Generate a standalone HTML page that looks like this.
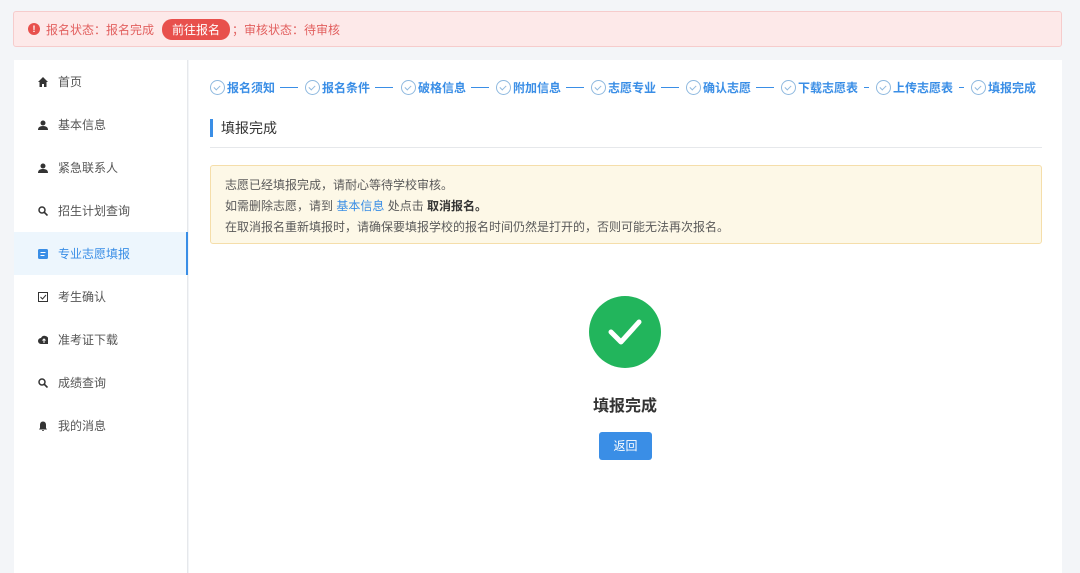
<!DOCTYPE html>
<html><head><meta charset="utf-8"><style>
*{margin:0;padding:0;box-sizing:border-box}
body{width:1080px;height:573px;background:#f3f5f8;font-family:"Liberation Sans","Noto Sans CJK SC",sans-serif;position:relative;overflow:hidden;color:#555}
.alert{position:absolute;left:13px;top:11px;width:1049px;height:36px;background:#fde9e9;border:1px solid #f6cccc;border-radius:3px;font-size:12px;color:#e2605f;display:flex;align-items:center;padding-left:14px}
.alert .dot{width:12px;height:12px;border-radius:50%;background:#e8504c;color:#fff;font-size:9px;text-align:center;line-height:12px;font-weight:bold;margin-right:6px}
.alert .btn{background:#e8504c;color:#fff;border-radius:10px;padding:2px 10px;margin:0 2px 0 8px;font-size:12px}
.side{position:absolute;left:14px;top:60px;width:174px;height:513px;background:#fff;border-right:1px solid #e6e8eb}
.item{height:43px;display:flex;align-items:center;padding-left:24px;font-size:12px;color:#555;position:relative}
.item .ic{width:10px;height:10px;margin-right:10px;display:inline-flex;align-items:center;justify-content:center}
.item.act{background:#edf6fd;color:#3a8ee6}
.item.act:after{content:"";position:absolute;right:-1px;top:0;bottom:0;width:2px;background:#3a8ee6}
.main{position:absolute;left:189px;top:60px;width:873px;height:513px;background:#fff}
.step{position:absolute;top:79px;font-size:12px;font-weight:bold;color:#3a8ee6;display:flex;align-items:center;white-space:nowrap}
.step .c{width:15px;height:15px;border:1px solid #8fb9df;border-radius:50%;margin-right:2px;position:relative}
.step .c:after{content:"";position:absolute;left:4px;top:3px;width:3px;height:5px;border:solid #8fb9df;border-width:0 1px 1px 0;transform:rotate(45deg)}
.ln{position:absolute;top:87px;height:1px;background:#3a8ee6}
</style></head><body>
<div class="alert"><span class="dot">!</span>报名状态：报名完成<span class="btn">前往报名</span>；审核状态：待审核</div>
<div class="side">
<div class="item"><span class="ic"><svg width="10" height="10"><path d="M5 0L0 5h1.5v5h2.5V7h2v3h2.5V5H10z" fill="#333"/></svg></span>首页</div>
<div class="item"><span class="ic"><svg width="10" height="10"><circle cx="5" cy="3" r="2.5" fill="#333"/><path d="M0 10c0-3 2-4 5-4s5 1 5 4z" fill="#333"/></svg></span>基本信息</div>
<div class="item"><span class="ic"><svg width="10" height="10"><circle cx="5" cy="3" r="2.5" fill="#333"/><path d="M0 10c0-3 2-4 5-4s5 1 5 4z" fill="#333"/></svg></span>紧急联系人</div>
<div class="item"><span class="ic"><svg width="10" height="10"><circle cx="4" cy="4" r="3" stroke="#333" stroke-width="1.5" fill="none"/><path d="M6 6l3.5 3.5" stroke="#333" stroke-width="1.6"/></svg></span>招生计划查询</div>
<div class="item act"><span class="ic"><svg width="10" height="10"><rect width="10" height="10" rx="1.5" fill="#3a8ee6"/><path d="M2.5 3.5h5M2.5 6.5h4" stroke="#fff" stroke-width="1"/></svg></span>专业志愿填报</div>
<div class="item"><span class="ic"><svg width="10" height="10"><rect x=".5" y=".5" width="9" height="9" stroke="#333" fill="none"/><path d="M2.5 5l2 2 3.5-4" stroke="#333" fill="none"/></svg></span>考生确认</div>
<div class="item"><span class="ic"><svg width="12" height="10"><path d="M3 9a3 3 0 010-6 4 4 0 017.5 1A2.5 2.5 0 0110 9z" fill="#333"/><path d="M6 4v4M4.5 5.5L6 4l1.5 1.5" stroke="#fff" fill="none"/></svg></span>准考证下载</div>
<div class="item"><span class="ic"><svg width="10" height="10"><circle cx="4" cy="4" r="3" stroke="#333" stroke-width="1.5" fill="none"/><path d="M6 6l3.5 3.5" stroke="#333" stroke-width="1.6"/></svg></span>成绩查询</div>
<div class="item"><span class="ic"><svg width="10" height="10"><path d="M5 0.5C3 .5 2 2 2 4v3L1 8.5h8L8 7V4C8 2 7 .5 5 .5zM4 9h2a1 1 0 01-2 0z" fill="#333"/></svg></span>我的消息</div>
</div>
<div class="main"></div>
<div class="step" style="left:210px"><span class="c"></span>报名须知</div><div class="ln" style="left:280px;width:18px"></div>
<div class="step" style="left:305px"><span class="c"></span>报名条件</div><div class="ln" style="left:375px;width:18px"></div>
<div class="step" style="left:401px"><span class="c"></span>破格信息</div><div class="ln" style="left:471px;width:18px"></div>
<div class="step" style="left:496px"><span class="c"></span>附加信息</div><div class="ln" style="left:566px;width:18px"></div>
<div class="step" style="left:591px"><span class="c"></span>志愿专业</div><div class="ln" style="left:661px;width:18px"></div>
<div class="step" style="left:686px"><span class="c"></span>确认志愿</div><div class="ln" style="left:756px;width:18px"></div>
<div class="step" style="left:781px"><span class="c"></span>下载志愿表</div><div class="ln" style="left:864px;width:5px"></div>
<div class="step" style="left:876px"><span class="c"></span>上传志愿表</div><div class="ln" style="left:959px;width:5px"></div>
<div class="step" style="left:971px"><span class="c"></span>填报完成</div>
<div style="position:absolute;left:210px;top:119px;width:3px;height:18px;background:#3a8ee6"></div>
<div style="position:absolute;left:221px;top:119px;font-size:14px;color:#333;line-height:18px">填报完成</div>
<div style="position:absolute;left:210px;top:147px;width:832px;height:1px;background:#e6e8eb"></div>
<div style="position:absolute;left:210px;top:165px;width:832px;height:79px;background:#fdf8e7;border:1px solid #f5deaa;border-radius:3px;padding:9px 14px;font-size:12px;line-height:21px;color:#5a5a5a">
志愿已经填报完成，请耐心等待学校审核。<br>如需删除志愿，请到 <span style="color:#3a8ee6">基本信息</span> 处点击 <b style="color:#333">取消报名。</b><br>在取消报名重新填报时，请确保要填报学校的报名时间仍然是打开的，否则可能无法再次报名。</div>
<div style="position:absolute;left:589px;top:296px;width:72px;height:72px;border-radius:50%;background:#22b55c"></div>
<svg style="position:absolute;left:589px;top:296px" width="72" height="72"><path d="M22 36l10 10 18-20" stroke="#fff" stroke-width="5" fill="none" stroke-linecap="round" stroke-linejoin="round"/></svg>
<div style="position:absolute;left:560px;top:392px;width:130px;text-align:center;font-size:16px;font-weight:bold;color:#333">填报完成</div>
<div style="position:absolute;left:599px;top:432px;width:53px;height:28px;background:#3a8ee6;border-radius:3px;color:#fff;font-size:12px;text-align:center;line-height:28px">返回</div>
</body></html>
